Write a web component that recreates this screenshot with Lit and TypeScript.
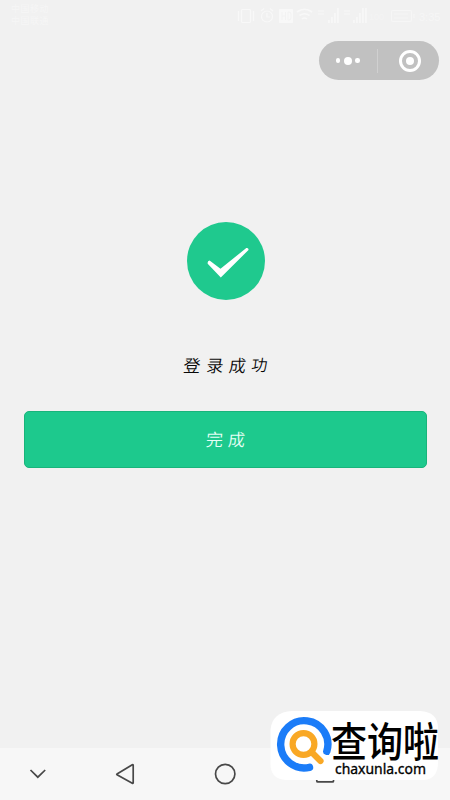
import { LitElement, html, css } from "lit";
import { customElement } from "lit/decorators.js";

@customElement("status-bar")
class StatusBar extends LitElement {
  static styles = css`
    :host { display: flex; justify-content: space-between; height: 32px; box-sizing: border-box; padding: 3px 9px 0 11px; color: #f6f6f6; font-family: "Liberation Sans", "Noto Sans CJK SC", sans-serif; }
    .carriers { font-size: 9px; line-height: 12px; letter-spacing: 0.5px; }
    svg { display: block; }
  `;
  render() {
    return html`
      <div class="carriers"><div>中国移动</div><div>中国联通</div></div>
      <svg width="206" height="26" viewBox="235 3 206 26" fill="none" stroke="#f8f8f8" stroke-width="1.2">
        <rect x="241.500" y="9.500" width="9" height="13" rx="1" />
        <path d="M238.500 11v10M253.500 11v10" />
        <circle cx="267" cy="16.500" r="5.500" />
        <path d="M267 13v4h3M261 11l3-2.500M273 11l-3-2.500" />
        <rect x="279" y="9" width="14" height="14" rx="1" fill="#f8f8f8" stroke="none" />
        <path d="M282 12v8M285.500 12v8M282 16h4M288 12v8h1q2 0 2-2v-4q0-2-2-2z" stroke="#f2f2f2" stroke-width="1" />
        <path d="M297 12q7.500-5.500 15 0M299.500 15.500q5-3.500 10 0M302 19q2.500-2 5 0" stroke-width="1.6" />
        <path d="M329 23v-3M332 23v-6M335 23v-10M338 23V8M354 23v-3M357 23v-6M360 23v-10M363 23V8M366 23V8" stroke-width="1.6" />
        <path d="M318 11h6M318 14h6M344 11h6M344 14h6" />
        <rect x="391.500" y="10.500" width="20" height="11" rx="1.500" stroke="#f6f6f6" />
        <path d="M394 14h14M394 18h14M414 14v4" stroke="#f6f6f6" />
        <text x="369" y="20" font-size="9" fill="#f4f4f4" stroke="none">100</text>
        <text x="419" y="21" font-size="11" fill="#f6f6f6" stroke="none">3:35</text>
      </svg>
    `;
  }
}

@customElement("mini-capsule")
class MiniCapsule extends LitElement {
  static styles = css`
    :host { display: flex; align-items: center; width: 120px; height: 39px; border-radius: 20px; background: #c1c1c1; }
    .half { flex: 1; display: flex; align-items: center; justify-content: center; gap: 3.500px; }
    .half:last-child { padding-left: 3px; }
    .dot { width: 4.500px; height: 4.500px; border-radius: 50%; background: #fff; }
    .big { width: 8px; height: 8px; }
    .rule { width: 1px; height: 24px; background: #d0d0d0; }
    .ring { box-sizing: border-box; width: 22px; height: 22px; border: 3px solid #fff; border-radius: 50%; display: flex; align-items: center; justify-content: center; }
  `;
  render() {
    return html`
      <div class="half"><span class="dot"></span><span class="dot big"></span><span class="dot"></span></div>
      <div class="rule"></div>
      <div class="half"><span class="ring"><span class="dot big"></span></span></div>
    `;
  }
}

@customElement("site-mark")
class SiteMark extends LitElement {
  static styles = css`
    :host { display: block; width: 172px; height: 72px; }
    svg { display: block; overflow: visible; }
    .name { font-family: "Noto Sans CJK SC", sans-serif; font-weight: 500; font-size: 36px; }
    .site { font-family: "Noto Sans", sans-serif; font-weight: 400; font-size: 15px; }
  `;
  render() {
    return html`
      <svg width="172" height="72" viewBox="271 711 172 72">
        <path fill="#fff" d="M292 711H420Q438 712 438 728V762Q438 779 424 780H286Q271 779 270.500 765V730Q272 712 292 711Z" />
        <path d="M326.800 751.300A23.600 23.600 0 1 0 309.500 767.300" fill="none" stroke="#1b7cf8" stroke-width="7.400" stroke-linecap="round" />
        <circle cx="303.500" cy="744" r="10.900" fill="none" stroke="#f9a825" stroke-width="6.200" />
        <path d="M311.500 752L320.500 761" stroke="#f9a825" stroke-width="6.200" stroke-linecap="round" />
        <text class="name" transform="translate(331 757) scale(1 1.13)" fill="#000">查询啦</text>
        <text class="site" x="335" y="774" textLength="91" lengthAdjust="spacingAndGlyphs" fill="#000" stroke="#000" stroke-width="0.350">chaxunla.com</text>
      </svg>
    `;
  }
}

@customElement("nav-bar")
class NavBar extends LitElement {
  static styles = css`
    :host { display: block; height: 52px; background: #f7f7f7; }
    svg { display: block; }
  `;
  render() {
    return html`
      <svg width="450" height="52" viewBox="0 748 450 52" fill="none" stroke="#484848" stroke-width="1.7" stroke-linejoin="round">
        <path d="M30.500 770L37.800 777.200L45.200 770" stroke-linejoin="miter" />
        <path d="M117 774L132.300 764.700Q133.200 764.300 133.200 765.300V782.700Q133.200 783.700 132.300 783.200L117 774.700Q116.400 774.300 117 774Z" />
        <circle cx="225.200" cy="774" r="9.700" />
        <rect x="316.800" y="765.500" width="16.700" height="16.400" rx="1" />
      </svg>
    `;
  }
}

@customElement("app-root")
class AppRoot extends LitElement {
  static styles = css`
    :host { display: flex; flex-direction: column; position: relative; width: 450px; height: 800px; background: #f1f1f1; overflow: hidden; }
    mini-capsule { align-self: flex-end; margin: 9px 11.500px 0 0; }
    main { flex: 1; display: flex; flex-direction: column; align-items: center; padding: 142px 0 0 1px; }
    svg { overflow: visible; }
    .done { display: block; width: 78px; height: 78px; margin-left: 1px; }
    .hand { font-family: "Noto Sans CJK SC", sans-serif; font-weight: 350; }
    .message { width: 86px; height: 24px; margin-top: 53px; }
    .action { box-sizing: border-box; width: 403px; height: 57px; margin-top: 34px; border: 1px solid #19b47b; border-radius: 5px; background: #1dc98d; display: flex; align-items: center; justify-content: center; }
    .label { width: 40px; height: 24px; }
    site-mark { position: absolute; left: 271px; top: 711px; }
  `;
  render() {
    return html`
      <status-bar></status-bar>
      <mini-capsule></mini-capsule>
      <main>
        <svg class="done" viewBox="187 222 78 78">
          <circle cx="226" cy="261" r="39" fill="#1fc98e" />
          <path fill="#fff" d="M207.700 263.700Q207.200 261 209.600 260.600L220.500 268.800L246.300 248Q248.800 247.500 248.500 250L220.800 277.400Z" />
        </svg>
        <svg class="message" viewBox="0 0 86 24">
          <g class="hand" font-size="17" fill="#080808" transform="skewX(-7)">
            <text x="2" y="18.500">登</text><text x="25" y="18.500">录</text><text x="47.500" y="18.500">成</text><text x="70" y="18" font-size="16">功</text>
          </g>
        </svg>
        <div class="action">
          <svg class="label" viewBox="0 0 40 24">
            <g class="hand" font-size="17" fill="#e6fff5" transform="skewX(-5)">
              <text x="1" y="18">完</text><text x="23" y="18">成</text>
            </g>
          </svg>
        </div>
      </main>
      <nav-bar></nav-bar>
      <site-mark></site-mark>
    `;
  }
}
